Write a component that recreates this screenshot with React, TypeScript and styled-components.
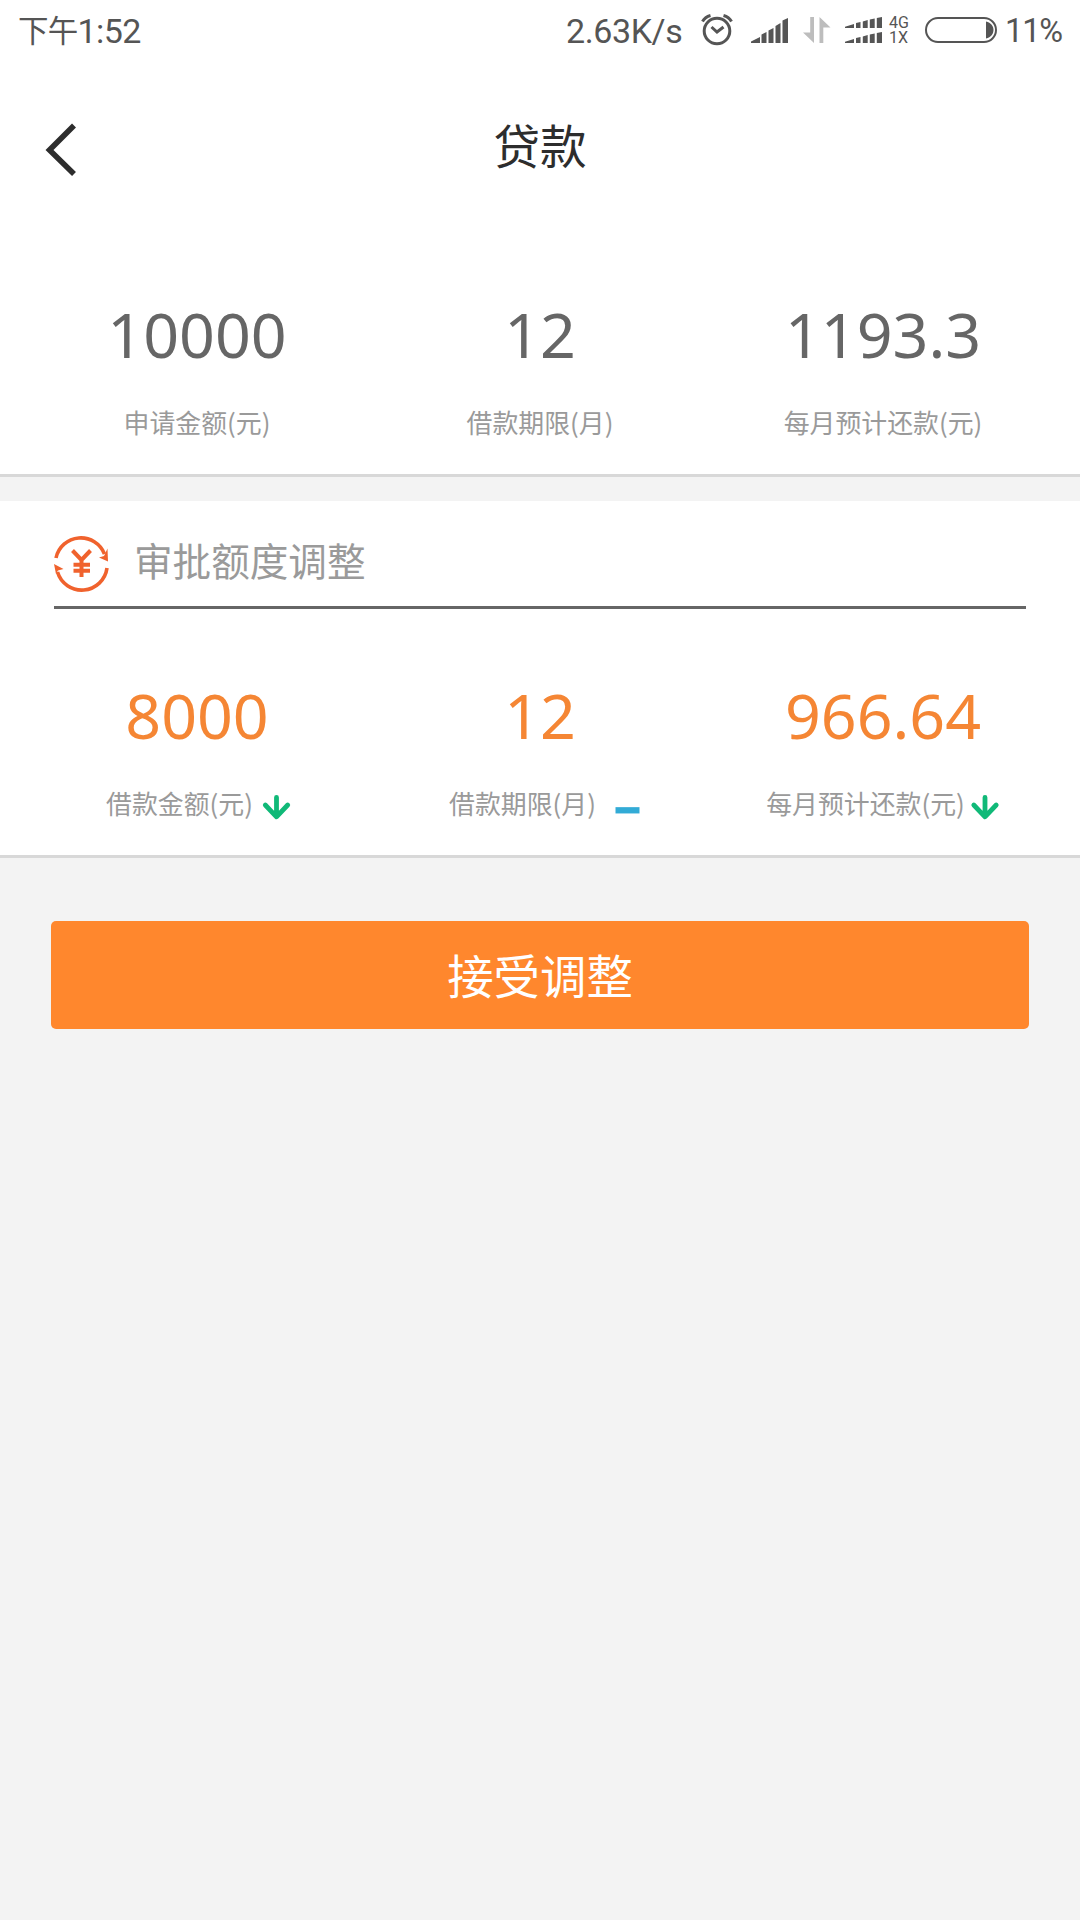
import React from "react";
import styled, { createGlobalStyle } from "styled-components";

const GlobalStyle = createGlobalStyle`
  * { box-sizing: border-box; }
  body {
    margin: 0;
    background: #f3f3f3;
    font-family: "Noto Sans CJK SC", "Noto Sans", sans-serif;
  }
  svg { display: block; flex: none; overflow: visible; }
`;

const Screen = styled.div`
  width: 1080px;
  min-height: 1920px;
  background: #f3f3f3;
  display: flex;
  flex-direction: column;
`;

const StatusBar = styled.div`
  height: 62px;
  background: #fff;
  display: flex;
  align-items: center;
  padding: 0 20px 0 18px;
  color: #555;
  font-family: Roboto, "Noto Sans CJK SC", sans-serif;
  font-size: 34px;
  line-height: 62px;
  white-space: nowrap;
`;

const Clock = styled.div`
  flex: 1;
  display: flex;
  letter-spacing: -0.6px;
`;

const Meridiem = styled.span`
  position: relative;
  top: 1px;
  font-size: 30.5px;
  letter-spacing: -0.7px;
`;

const Speed = styled.span`
  width: 117px;
  letter-spacing: -0.4px;
`;

const StatusIcons = styled.div`
  display: flex;
  margin-left: 18px;
`;

const Percent = styled.span`
  width: 55px;
  margin-left: 8px;
  letter-spacing: -1.1px;
  font-size: 32.5px;
`;

const NetworkType = styled.div`
  display: flex;
  flex-direction: column;
  justify-content: center;
  width: 22px;
  height: 62px;
  margin: 0 14px 0 7px;
  padding-bottom: 2px;
  font-size: 16px;
  line-height: 15px;
`;

const Header = styled.header`
  height: 174px;
  background: #fff;
  display: grid;
  grid-template-columns: 120px 1fr 120px;
  align-items: start;
`;

const BackButton = styled.button`
  border: 0;
  background: none;
  padding: 61px 0 0 43px;
`;

const Title = styled.h1`
  margin: 47px 0 0;
  color: #2d2d2d;
  font-size: 46.6px;
  font-weight: 400;
  line-height: 70px;
  text-align: center;
`;

const Panel = styled.section`
  background: #fff;
  border-bottom: 3px solid #d8d8d8;
`;

const AdjustPanel = styled(Panel)`
  margin-top: 24px;
`;

const Figures = styled.div<{ $top: number }>`
  display: grid;
  grid-template-columns: repeat(3, 343px);
  justify-content: center;
  padding: ${(p) => p.$top}px 0 34px;
`;

const Figure = styled.div`
  display: flex;
  flex-direction: column;
  align-items: center;
  gap: 35px;
`;

const Value = styled.div<{ $accent?: boolean }>`
  color: ${(p) => (p.$accent ? "#f58634" : "#666")};
  font-family: "Noto Sans", sans-serif;
  font-size: 62.7px;
  line-height: 70px;
`;

const Label = styled.div`
  display: flex;
  height: 36px;
  color: #9a9a9a;
  font-size: 25.9px;
  font-weight: 400;
  line-height: 36px;
  white-space: nowrap;
`;

const SectionHead = styled.div`
  display: flex;
  align-items: center;
  height: 108px;
  margin: 0 54px;
  border-bottom: 3px solid #666;
`;

const SectionTitle = styled.h2`
  margin: 0 0 0 26px;
  padding-top: 11px;
  color: #9a9a9a;
  font-size: 38.6px;
  font-weight: 400;
  line-height: 54px;
`;

const RefreshMark = styled.div`
  width: 54px;
  margin-top: 19px;
`;

const AcceptButton = styled.button`
  height: 108px;
  margin: 63px 51px 0;
  padding: 0 0 3px;
  border: 0;
  border-radius: 5px;
  background: #ff872d;
  color: #fff;
  font-family: inherit;
  font-size: 46.4px;
  line-height: 70px;
`;

type Trend = "down" | "same";

const TrendIcon = ({ trend, x = 24 }: { trend: Trend; x?: number }) => (
  <svg width="35" height="36" viewBox="0 0 35 36" fill="none">
    {trend === "down" ? (
      <path
        d={`M${x} 12.5V31M${x - 11.2} 20L${x} 31.8L${x + 11.2} 20`}
        stroke="#10b978"
        strokeWidth="4.8"
        strokeLinecap="round"
        strokeLinejoin="round"
      />
    ) : (
      <path d="M19.5 25.3H43.5" stroke="#32abd6" strokeWidth="6.3" />
    )}
  </svg>
);

const AlarmIcon = () => (
  <svg width="32" height="62" viewBox="0 0 32 62" fill="none" stroke="#555" strokeWidth="3">
    <circle cx="16" cy="31" r="12.8" />
    <path d="M10.5 27L16 32L22.5 27" />
    <path d="M1.5 21.5Q4 17 9.5 15.5M22.5 15.5Q28 17 30.5 21.5" />
  </svg>
);

const SignalIcon = () => (
  <svg width="38" height="62" viewBox="0 0 38 62" fill="#555">
    <path d="M0 43V41.5L9 37V43ZM10.5 43V34.5L15.5 32V43ZM17.5 43V30.5L22.5 28V43ZM24.5 43V26L29.5 23V43ZM31.5 43V20.5L37 18V43Z" />
  </svg>
);

const TransferIcon = () => (
  <svg width="28" height="62" viewBox="0 0 28 62" fill="#bdbdbd">
    <path d="M7.2 17H11V43L0 32.5H7.2ZM16.5 43H20.3V27.5H27.5L16.5 17Z" />
  </svg>
);

const barsPath =
  "M0 28V26.7L9 24V28ZM11 28V23L15.5 22V28ZM17.8 28V21.5L22.7 20V28ZM24.8 28V19.5L29.7 18.5V28ZM31.8 28V18L37 17V28Z";

const DualSignalIcon = () => (
  <svg width="37" height="62" viewBox="0 0 37 62" fill="#555">
    <path d={barsPath} />
    <path transform="translate(0 15)" d={barsPath} />
  </svg>
);

const BatteryIcon = () => (
  <svg width="72" height="62" viewBox="0 0 72 62" fill="none">
    <rect x="1" y="18" width="70" height="24" rx="12" stroke="#555" strokeWidth="2" />
    <path d="M61 21.5C71 24 71 36 61 38.5Z" fill="#555" />
  </svg>
);

const YenIcon = () => (
  <svg width="54" height="54" viewBox="-27 -27 54 54" fill="none" stroke="#f0622d" strokeWidth="3.6">
    <path d="M-25-5A25.4 25.4 0 0 1 23.5-9M26 5A25.4 25.4 0 0 1-23.5 9" />
    <path d="M26.5-14.5L27-1.5L18-5.5L23-7ZM-27 1L-17.5 6L-23 7.5L-25 11Z" fill="#f0622d" stroke="none" />
    <path d="M-8.5-12.5L.5-3L9.5-12.5M.5-3V14M-7.5 1.8H9M-7.5 7.8H9" strokeWidth="4" />
  </svg>
);

const Gap = styled.span<{ $w: number }>`
  width: ${(p) => p.$w}px;
`;

export default function App() {
  return (
    <Screen>
      <GlobalStyle />
      <StatusBar>
        <Clock>
          <Meridiem>下午</Meridiem>1:52
        </Clock>
        <Speed>2.63K/s</Speed>
        <StatusIcons>
          <AlarmIcon />
          <Gap $w={18} />
          <SignalIcon />
          <Gap $w={14} />
          <TransferIcon />
          <Gap $w={14} />
          <DualSignalIcon />
          <NetworkType>
            <span>4G</span>
            <span>1X</span>
          </NetworkType>
          <BatteryIcon />
        </StatusIcons>
        <Percent>11%</Percent>
      </StatusBar>
      <Header>
        <BackButton aria-label="返回">
          <svg width="34" height="54" viewBox="0 0 34 54" fill="none">
            <path d="M31 2.5L6.5 27L31 51" stroke="#2d2d2d" strokeWidth="5.6" />
          </svg>
        </BackButton>
        <Title>贷款</Title>
      </Header>
      <Panel>
        <Figures $top={63}>
          <Figure>
            <Value>10000</Value>
            <Label>申请金额(元)</Label>
          </Figure>
          <Figure>
            <Value>12</Value>
            <Label>借款期限(月)</Label>
          </Figure>
          <Figure>
            <Value>1193.3</Value>
            <Label>每月预计还款(元)</Label>
          </Figure>
        </Figures>
      </Panel>
      <AdjustPanel>
        <SectionHead>
          <RefreshMark>
            <YenIcon />
          </RefreshMark>
          <SectionTitle>审批额度调整</SectionTitle>
        </SectionHead>
        <Figures $top={71}>
          <Figure>
            <Value $accent>8000</Value>
            <Label>
              借款金额(元)
              <TrendIcon trend="down" x={23.5} />
            </Label>
          </Figure>
          <Figure>
            <Value $accent>12</Value>
            <Label>
              借款期限(月)
              <TrendIcon trend="same" />
            </Label>
          </Figure>
          <Figure>
            <Value $accent>966.64</Value>
            <Label>
              每月预计还款(元)
              <TrendIcon trend="down" x={20} />
            </Label>
          </Figure>
        </Figures>
      </AdjustPanel>
      <AcceptButton>接受调整</AcceptButton>
    </Screen>
  );
}
